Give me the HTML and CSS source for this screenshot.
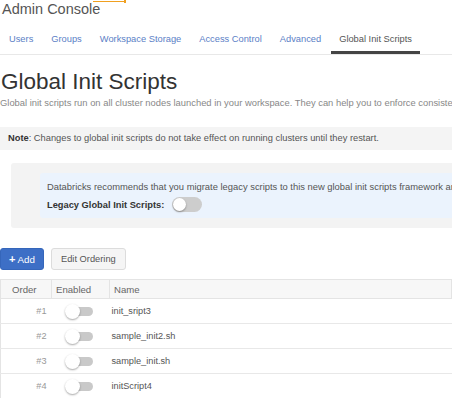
FILE: index.html
```html
<!DOCTYPE html>
<html lang="en">
<head>
    <meta charset="UTF-8">
    <meta name="viewport" content="width=device-width, initial-scale=1.0">
    <title>Admin Console - Global Init Scripts</title>
    <link rel="stylesheet" href="styles.css">
</head>
<body>
    <div class="accent"></div>

    <h1 class="app-title">Admin Console</h1>

    <nav class="tabs">
        <a class="tab">Users</a>
        <a class="tab">Groups</a>
        <a class="tab">Workspace Storage</a>
        <a class="tab">Access Control</a>
        <a class="tab">Advanced</a>
        <a class="tab active">Global Init Scripts</a>
    </nav>

    <h2 class="page-title">Global Init Scripts</h2>
    <p class="desc">Global init scripts run on all cluster nodes launched in your workspace. They can help you to enforce consistent cluster configurations across your workspace.</p>

    <div class="note"><b>Note</b>: Changes to global init scripts do not take effect on running clusters until they restart.</div>

    <div class="legacy">
        <div class="legacy-inner">
            <p class="legacy-text">Databricks recommends that you migrate legacy scripts to this new global init scripts framework and then disable legacy scripts.</p>
            <div class="legacy-row">
                <b>Legacy Global Init Scripts:</b>
                <span class="switch switch-big"><span class="knob"></span></span>
            </div>
        </div>
    </div>

    <div class="actions">
        <button class="btn btn-primary"><span class="plus">+</span> Add</button>
        <button class="btn">Edit Ordering</button>
    </div>

    <table class="scripts">
        <thead>
            <tr>
                <th class="col-order">Order</th>
                <th class="col-enabled">Enabled</th>
                <th>Name</th>
            </tr>
        </thead>
        <tbody>
            <tr>
                <td class="num">#1</td>
                <td><span class="switch"><span class="knob"></span></span></td>
                <td>init_sript3</td>
            </tr>
            <tr>
                <td class="num">#2</td>
                <td><span class="switch"><span class="knob"></span></span></td>
                <td>sample_init2.sh</td>
            </tr>
            <tr>
                <td class="num">#3</td>
                <td><span class="switch"><span class="knob"></span></span></td>
                <td>sample_init.sh</td>
            </tr>
            <tr>
                <td class="num">#4</td>
                <td><span class="switch"><span class="knob"></span></span></td>
                <td>initScript4</td>
            </tr>
        </tbody>
    </table>
</body>
</html>
```

FILE: styles.css
```css
body {
    margin: 0;
    width: 452px;
    overflow: hidden;
    font-family: "Liberation Sans", Arial, Helvetica, sans-serif;
    color: #444;
    background: #fff;
    position: relative;
}

/* bits of orange text cut off at the top */
.accent {
    position: absolute;
    top: 0;
    left: 93px;
    width: 33px;
    height: 2px;
    border-bottom: 1px solid #f0a020;
    box-sizing: border-box;
}

.accent::after {
    content: "";
    position: absolute;
    right: 0;
    top: 0;
    width: 2px;
    height: 3px;
    background: #f0a020;
}

.app-title {
    margin: 0;
    padding: 1px 0 0 2px;
    font-size: 14.5px;
    font-weight: normal;
    line-height: 17px;
    color: #555;
}

.tabs {
    display: flex;
    gap: 2px;
    margin-top: 3px;
    border-bottom: 1px solid #e8e8e8;
}

.tab {
    display: block;
    padding: 6px 8px 0;
    height: 24px;
    line-height: 24px;
    font-size: 9.3px;
    color: #5b80c6;
    border-bottom: 3px solid transparent;
}

.tab:first-child {
    margin-left: 1px;
}

.tab.active {
    color: #555;
    border-bottom-color: #444;
}

.page-title {
    margin: 13px 0 0 1px;
    font-size: 22.5px;
    font-weight: normal;
    line-height: 28px;
    color: #333;
}

.desc {
    margin: 1px 0 0 0;
    font-size: 9.4px;
    line-height: 12px;
    color: #888;
    white-space: nowrap;
}

.note {
    margin-top: 18px;
    height: 23px;
    line-height: 23px;
    padding: 0 8px;
    background: #f4f4f4;
    font-size: 9.3px;
    color: #555;
    white-space: nowrap;
}

.note b {
    color: #333;
}

.legacy {
    margin: 13px 0 0 11px;
    padding: 10px 0 10px 29px;
    background: #f3f3f3;
    border-radius: 3px 0 0 3px;
}

.legacy-inner {
    background: #ebf3fd;
    padding: 8px 0 6px 7px;
    white-space: nowrap;
    overflow: hidden;
    border-radius: 3px 0 0 3px;
}

.legacy-text {
    margin: 0;
    font-size: 9.4px;
    line-height: 12px;
    color: #555;
}

.legacy-row {
    display: flex;
    align-items: center;
    gap: 8px;
    margin-top: 4px;
    font-size: 9.3px;
    color: #333;
}

.switch {
    display: inline-block;
    position: relative;
    width: 26px;
    height: 9px;
    border-radius: 5px;
    background: #c9c9c9;
    vertical-align: middle;
}

.knob {
    position: absolute;
    left: -2px;
    top: -3px;
    width: 15px;
    height: 15px;
    border-radius: 50%;
    background: #fff;
    box-shadow: 0 1px 2px rgba(0, 0, 0, 0.35);
}

.switch-big {
    width: 30px;
    height: 15px;
    border-radius: 8px;
    background: #cdcdcd;
}

.switch-big .knob {
    left: 1px;
    top: 1px;
    width: 13px;
    height: 13px;
}

.actions {
    display: flex;
    gap: 7px;
    margin-top: 20px;
}

.btn {
    height: 22px;
    padding: 0 9px;
    font-family: inherit;
    font-size: 9.3px;
    color: #555;
    background: #f5f5f5;
    border: 1px solid #dcdcdc;
    border-radius: 3px;
}

.btn-primary {
    width: 44px;
    padding: 0;
    font-size: 9.8px;
    color: #fff;
    background: #3d6fc6;
    border-color: #3566ba;
}

.plus {
    font-weight: bold;
    font-size: 11px;
}

.scripts {
    margin-top: 9px;
    width: 100%;
    table-layout: fixed;
    border-collapse: collapse;
    font-size: 9.2px;
    color: #555;
    border-left: 1px solid #e4e4e4;
}

.scripts th {
    box-sizing: border-box;
    height: 19px;
    padding: 0 4px;
    text-align: left;
    font-size: 9.6px;
    font-weight: normal;
    color: #666;
    background: #f7f7f7;
    border-top: 1px solid #e4e4e4;
    border-bottom: 1px solid #e4e4e4;
    border-right: 1px solid #e4e4e4;
}

.scripts th.col-order {
    width: 51px;
    padding-left: 11px;
}

.scripts th.col-enabled {
    width: 58px;
}

.scripts td {
    height: 24px;
    padding: 0 2px;
    border-bottom: 1px solid #e8e8e8;
}

.scripts td.num {
    text-align: right;
    padding-right: 5px;
    color: #999;
}

.scripts td .switch {
    margin-left: 13px;
}
```
